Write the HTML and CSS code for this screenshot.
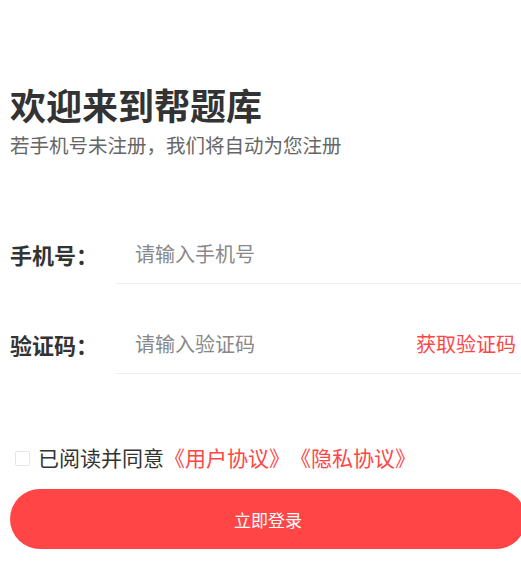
FILE: index.html
```html
<!DOCTYPE html>
<html lang="zh-CN">
<head>
<meta charset="utf-8">
<title>登录</title>
<link rel="stylesheet" href="styles.css">
</head>
<body>
<div class="page">
  <header class="intro">
    <h1 class="title">欢迎来到帮题库</h1>
    <p class="subtitle">若手机号未注册，我们将自动为您注册</p>
  </header>
  <form class="form">
    <div class="field">
      <span class="label">手机号：</span>
      <div class="input-wrap">
        <span class="placeholder">请输入手机号</span>
      </div>
    </div>
    <div class="field">
      <span class="label">验证码：</span>
      <div class="input-wrap">
        <span class="placeholder">请输入验证码</span>
        <span class="get-code">获取验证码</span>
      </div>
    </div>
    <div class="agree">
      <span class="checkbox"></span>
      <span class="agree-text">已阅读并同意<span class="link">《用户协议》</span><span class="link">《隐私协议》</span></span>
    </div>
    <div class="submit">立即登录</div>
  </form>
</div>
</body>
</html>
```
FILE: styles.css
```css
html, body {
  margin: 0;
  padding: 0;
  background: #ffffff;
  overflow: hidden;
}
body {
  font-family: "Noto Sans CJK SC", "Noto Sans", sans-serif;
  width: 521px;
  height: 563px;
  text-spacing-trim: space-all;
}
.page {
  padding: 0 0 0 10px;
}
.intro {
  padding-top: 81px;
}
.title {
  margin: 0;
  font-size: 36px;
  line-height: 46px;
  font-weight: 700;
  color: #333333;
}
.subtitle {
  margin: 4px 0 0 0;
  font-size: 19.5px;
  line-height: 28px;
  color: #666666;
}
.form {
  padding-top: 65px;
}
.field {
  display: flex;
  align-items: stretch;
  height: 60px;
  margin-bottom: 30px;
}
.label {
  width: 105px;
  flex: none;
  display: flex;
  align-items: center;
  font-size: 22px;
  font-weight: 700;
  color: #333333;
}
.input-wrap {
  flex: 1;
  display: flex;
  align-items: center;
  justify-content: space-between;
  border-bottom: 1px solid #eeeeee;
  padding: 0 5px 0 20px;
}
.placeholder {
  font-size: 20px;
  color: #888888;
}
.get-code {
  font-size: 20px;
  color: #ff4545;
}
.agree {
  display: flex;
  align-items: center;
  margin-top: 68px;
  height: 30px;
}
.checkbox {
  width: 13px;
  height: 13px;
  border: 1px solid #e6e6e6;
  border-radius: 2px;
  margin: 2px 8px 0 5px;
  flex: none;
}
.agree-text {
  font-size: 21px;
  color: #333333;
}
.link {
  color: #ff4545;
}
.submit {
  margin-top: 17px;
  width: 516px;
  height: 60px;
  border-radius: 30px;
  background: #ff4545;
  color: #ffffff;
  font-size: 17px;
  display: flex;
  align-items: center;
  justify-content: center;
}
```
